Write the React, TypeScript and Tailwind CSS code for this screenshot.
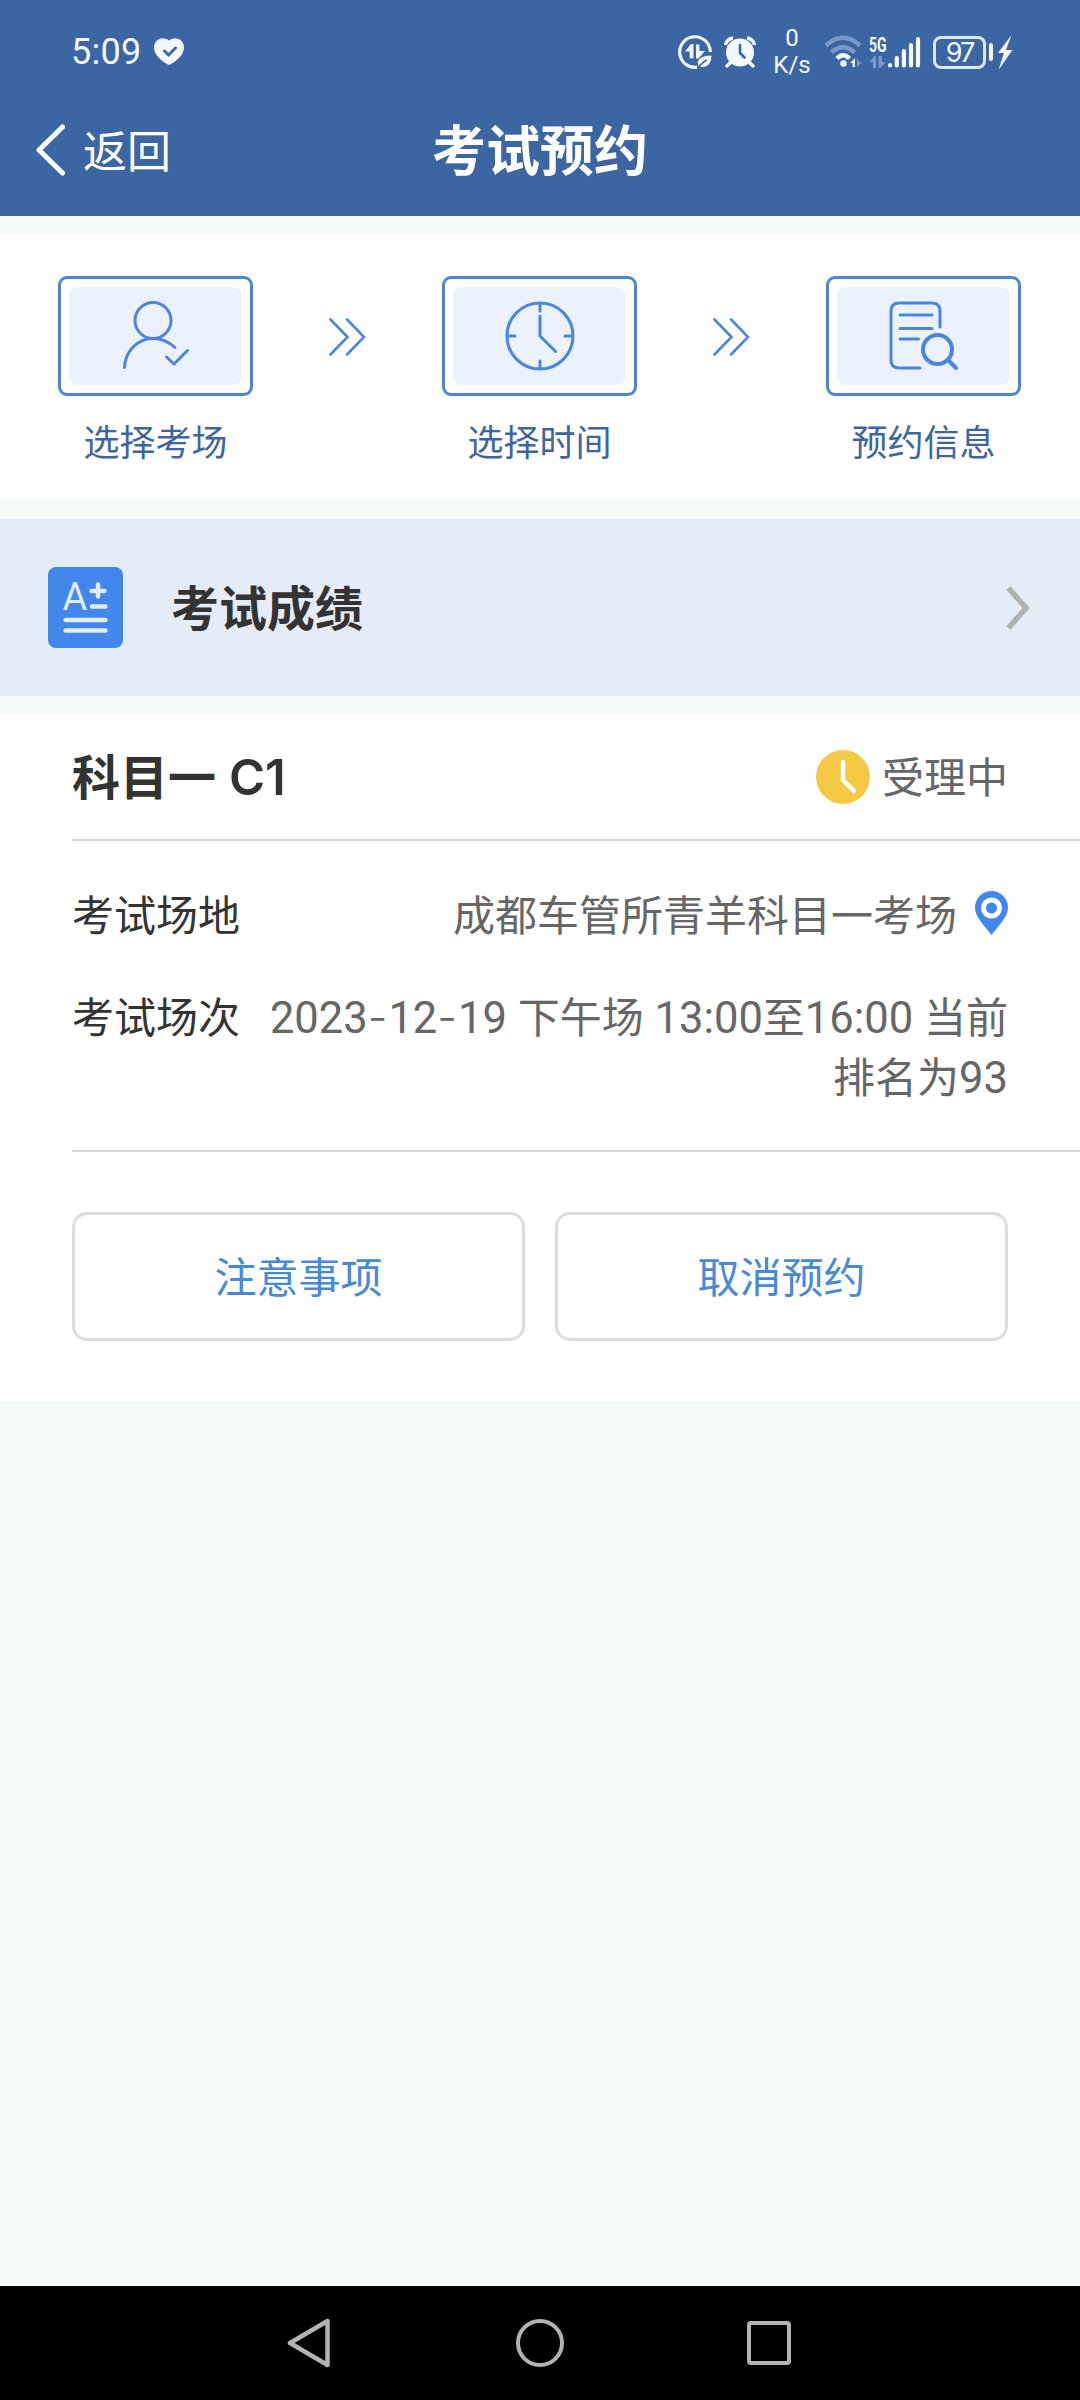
import type { ReactNode } from 'react'

function StatusBar() {
  return (
    <div className="flex h-[84px] items-center justify-between pl-[71px] pr-[67px] pt-5 text-[#f3f7ff]">
      <div className="flex items-center gap-3">
        <span className="font-[Roboto,sans-serif] text-[36px] leading-[42px] tracking-[0.300px]">5:09</span>
        <svg width="30" height="28" viewBox="0 0 30 28">
          <path
            d="M15 27C12 26 0 18.500 0 9.500C0 1 9 -2.500 15 2.500C21 -2.500 30 1 30 9.500C30 18.500 18 26 15 27Z"
            fill="#f3f7ff"
          />
          <path d="M10.500 13l4 4 7-7" fill="none" stroke="#3b65a3" strokeWidth="3" strokeLinecap="round" />
        </svg>
      </div>
      <div className="flex items-center">
        <svg className="mr-3" width="34" height="34" viewBox="0 0 34 34" fill="none">
          <path d="M32.300 17A15.300 15.300 0 1 0 19 32.200" stroke="currentColor" strokeWidth="3.200" />
          <path d="M7 16.500L13 9h2.500v14.500h-3.800v-7zM18 9.500h3.500v6.500h5.500L20.500 23.500H18z" fill="currentColor" />
          <path d="M20 32C17 23 25 20 34 20C34 29 29 34 22 32Z" fill="currentColor" stroke="#3b65a3" strokeWidth="1" />
          <path d="M19.500 33C23 29 25 27 29 25" stroke="#3b65a3" strokeWidth="1.600" />
        </svg>
        <svg className="mr-[18px]" width="32" height="32" viewBox="0 0 32 32" fill="none">
          <path d="M1.500 9A9 9 0 0 1 9 2M23 2a9 9 0 0 1 7.500 7" stroke="currentColor" strokeWidth="3.400" />
          <path d="M7 26l-4 4M25 26l4 4" stroke="currentColor" strokeWidth="3.500" strokeLinecap="round" />
          <circle cx="16" cy="16.500" r="14" fill="currentColor" />
          <path d="M16 9v8l4.500 4.500" stroke="#3b65a3" strokeWidth="2.600" strokeLinecap="round" />
        </svg>
        <div className="mr-[14px] flex w-9 flex-col items-center font-[Roboto,sans-serif] text-[24px] leading-[27px]">
          <span>0</span>
          <span>K/s</span>
        </div>
        <svg className="mr-[5px]" width="40" height="34" viewBox="0 0 40 34" fill="none">
          <path d="M2 10.500Q19 -5 36 10.500" stroke="#7b98cb" strokeWidth="4.500" />
          <path d="M7.500 17.500Q19 7 30.500 17.500" stroke="#7b98cb" strokeWidth="4.500" />
          <path d="M13 23.500Q19 17 25.500 23.500" stroke="currentColor" strokeWidth="4.500" />
          <circle cx="19.500" cy="28.500" r="3.200" fill="currentColor" />
          <path d="M26 28l5-5v9h-2.500v-4z" fill="currentColor" />
          <path d="M33 23v9l5-5h-2.500z" fill="#7b98cb" />
        </svg>
        <div className="flex w-[18px] flex-col items-start">
          <span className="origin-left scale-x-70 font-[Roboto,sans-serif] text-[20px] font-bold leading-[19px]">5G</span>
          <svg className="mt-px" width="17" height="12" viewBox="0 0 17 12" fill="#7b98cb">
            <path d="M0 6L5.500 0H7v12H4V6zM9.500 0v12H11l6-6h-4V0z" />
          </svg>
        </div>
        <svg className="mr-3" width="34" height="32" viewBox="0 0 34 32" stroke="currentColor" strokeWidth="4.200" strokeLinecap="round">
          <path d="M3 29v.500M9.800 22v7.500M16.900 15v14.500M24 9v20.500M31 3v26.500" />
        </svg>
        <div className="flex h-[33px] w-[53px] items-center justify-center rounded-[8px] border-[3px] border-[#dde7f8] font-[Inter,sans-serif] text-[27px] leading-[27px] tracking-[-2px]">
          97
        </div>
        <span className="ml-[3px] mr-[5px] h-[18px] w-1 rounded-sm bg-[#f3f7ff]" />
        <svg width="15" height="35" viewBox="0 0 15 35" fill="currentColor">
          <path d="M13.500 0L0 18h6L0.500 35 14.500 15H8z" />
        </svg>
      </div>
    </div>
  )
}

function Header() {
  return (
    <header className="h-[216px] bg-[#3b65a3] text-white">
      <StatusBar />
      <div className="grid h-[132px] grid-cols-3 items-center">
        <div className="flex items-center gap-[18px] pl-[36px]">
          <svg width="29" height="52" viewBox="0 0 29 52" fill="none">
            <path d="M26.500 3L3 26l23.500 23" stroke="white" strokeWidth="5" strokeLinecap="round" strokeLinejoin="round" />
          </svg>
          <span className="pb-[3px] text-[44px] leading-[60px]">返回</span>
        </div>
        <h1 className="pb-[5px] text-center text-[54px] font-bold leading-[60px]">考试预约</h1>
      </div>
    </header>
  )
}

function Step({ label, children }: { label: string; children: ReactNode }) {
  return (
    <div className="flex w-[195px] flex-col items-center">
      <div className="h-[120px] w-full rounded-[9px] border-[3px] border-[#5085d0] p-2">
        <div className="flex h-full items-center justify-center rounded-[9px] bg-[#ebf2fd]">
          <svg width="72" height="72" viewBox="0 0 72 72" fill="none" stroke="#4a86dd" strokeWidth="3" strokeLinecap="round">
            {children}
          </svg>
        </div>
      </div>
      <span className="mt-[17px] text-[36px] leading-[54px] text-[#3f65a0]">{label}</span>
    </div>
  )
}

function StepArrow() {
  return (
    <svg className="mt-[41px]" width="38" height="40" viewBox="0 0 38 40" fill="none" stroke="#4a86dd" strokeWidth="2.600" strokeLinecap="round">
      <path d="M1.500 2.500l17 17.500-17 17.500M18 2.500L35 20 18 37.500" />
    </svg>
  )
}

function Steps() {
  return (
    <section className="mt-[18px] flex h-[267px] items-start justify-between bg-white pl-[58px] pr-[59px] pt-[42px]">
      <Step label="选择考场">
        <circle cx="33" cy="20.500" r="18" />
        <path d="M4.500 67.500C5 53 16 38.500 33 38.500c9 0 16 3.500 22 9M46.500 57l7.500 7 13.500-13.500" />
      </Step>
      <StepArrow />
      <Step label="选择时间">
        <circle cx="36" cy="36" r="33" />
        <path d="M36 4v7M36 61v7M4 36h7M61 36h7M36 16v20l15.500 15.500" />
      </Step>
      <StepArrow />
      <Step label="预约信息">
        <path d="M52 27V11q0-8-8-8H11q-8 0-8 8v49q0 8 8 8h21M12 15h32M12 28.500h32M12 39h18.500" />
        <circle cx="49.500" cy="49.500" r="14.500" strokeWidth="4" />
        <path d="M60 60l8 8" strokeWidth="4" />
      </Step>
    </section>
  )
}

function ScoreLink() {
  return (
    <section className="mt-[18px] flex h-[177px] items-center bg-[#e4ecf8] pl-12 pr-[49px]">
      <svg width="75" height="81" viewBox="0 0 75 81">
        <rect width="75" height="81" rx="8" fill="#4287ec" />
        <text x="27" y="42.500" textAnchor="middle" fontFamily="Roboto, sans-serif" fontSize="38" fill="#e4ecfb">
          A
        </text>
        <path
          d="M43.500 24h13M50 17.500v12M44 39.500h13.500M17.500 53h40M17.500 63.500h40"
          fill="none"
          stroke="#e0ebfc"
          strokeWidth="4.500"
          strokeLinecap="round"
        />
      </svg>
      <span className="ml-12 flex-1 pb-[6px] text-[48px] font-bold leading-[60px] text-[#333]">考试成绩</span>
      <svg width="25" height="46" viewBox="0 0 25 46" fill="none">
        <path d="M2.500 3L20 23 2.500 43" stroke="#b0b0b0" strokeWidth="5.500" />
      </svg>
    </section>
  )
}

function Num({ children }: { children: ReactNode }) {
  return <span className="font-[Roboto,sans-serif] text-[43.500px] leading-none">{children}</span>
}

function Dash() {
  return <span className="font-[Inter,sans-serif] font-light leading-none tracking-[1px]">-</span>
}

function Booking() {
  return (
    <section className="mt-[18px] h-[687px] bg-white pl-[72px]">
      <div className="flex h-[127px] items-center justify-between border-b-2 border-[#d8d8d8] pr-[72px]">
        <h2 className="pb-[5px] text-[48px] font-bold leading-[60px] text-[#333]">
          科目一 <span className="ml-[2px] font-[Inter,sans-serif] text-[49px] font-semibold leading-none">C1</span>
        </h2>
        <div className="flex items-center gap-3 text-[42px] leading-[60px] text-[#666]">
          <svg width="54" height="54" viewBox="0 0 54 54" fill="none">
            <circle cx="27" cy="27" r="27" fill="#f3c944" />
            <path d="M27 12v18l11 11" stroke="white" strokeWidth="4.500" strokeLinecap="round" />
          </svg>
          <span className="pb-[4px]">受理中</span>
        </div>
      </div>

      <div className="h-[311px] border-b-2 border-[#d8d8d8] pr-[72px] pt-[42px] text-[42px] leading-[60px]">
        <div className="flex items-center justify-between">
          <span className="text-[#333]">考试场地</span>
          <span className="flex items-center gap-[18px] text-[#666]">
            成都车管所青羊科目一考场
            <svg width="33" height="44" viewBox="0 0 33 44">
              <path d="M16.500 0A16.500 16.500 0 0 0 0 16.500C0 26 9 34 16.500 44C24 34 33 26 33 16.500A16.500 16.500 0 0 0 16.500 0Z" fill="#4287ec" />
              <circle cx="16.500" cy="17" r="10.500" fill="white" />
              <circle cx="16.500" cy="17" r="5.500" fill="#4287ec" />
            </svg>
          </span>
        </div>
        <div className="mt-[42px] flex items-start justify-between">
          <span className="shrink-0 text-[#333]">考试场次</span>
          <div className="whitespace-nowrap text-right text-[#666]">
            <p>
              <Num>
                2023
                <Dash />
                12
                <Dash />
                19{' '}
              </Num>
              下午场
              <Num> 13:00</Num>至<Num>16:00 </Num>
              当前
            </p>
            <p>
              排名为<Num>93</Num>
            </p>
          </div>
        </div>
      </div>

      <div className="flex gap-[30px] pr-[72px] pt-[60px]">
        {['注意事项', '取消预约'].map((text) => (
          <button
            key={text}
            className="h-[129px] flex-1 rounded-[15px] border-[3px] border-[#ddd] bg-white pb-[4px] text-[42px] leading-[60px] text-[#468ad6]"
          >
            {text}
          </button>
        ))}
      </div>
    </section>
  )
}

function NavBar() {
  return (
    <nav className="flex h-[114px] items-center bg-black pl-[287px]">
      <svg width="44" height="50" viewBox="0 0 44 50" fill="none" stroke="#b3b3b3" strokeWidth="4.500" strokeLinejoin="round">
        <path d="M3 25L40.500 3v44z" />
      </svg>
      <svg className="ml-[184px]" width="50" height="50" viewBox="0 0 50 50" fill="none" stroke="#b3b3b3" strokeWidth="4">
        <circle cx="25" cy="25" r="22" />
      </svg>
      <span className="ml-[182px] size-11 rounded-[4px] border-4 border-[#b3b3b3]" />
    </nav>
  )
}

export default function App() {
  return (
    <div className="flex h-[2400px] w-[1080px] flex-col overflow-hidden bg-[#f4f9fa] font-['Noto_Sans_CJK_SC',sans-serif]">
      <Header />
      <Steps />
      <ScoreLink />
      <Booking />
      <div className="flex-1" />
      <NavBar />
    </div>
  )
}
